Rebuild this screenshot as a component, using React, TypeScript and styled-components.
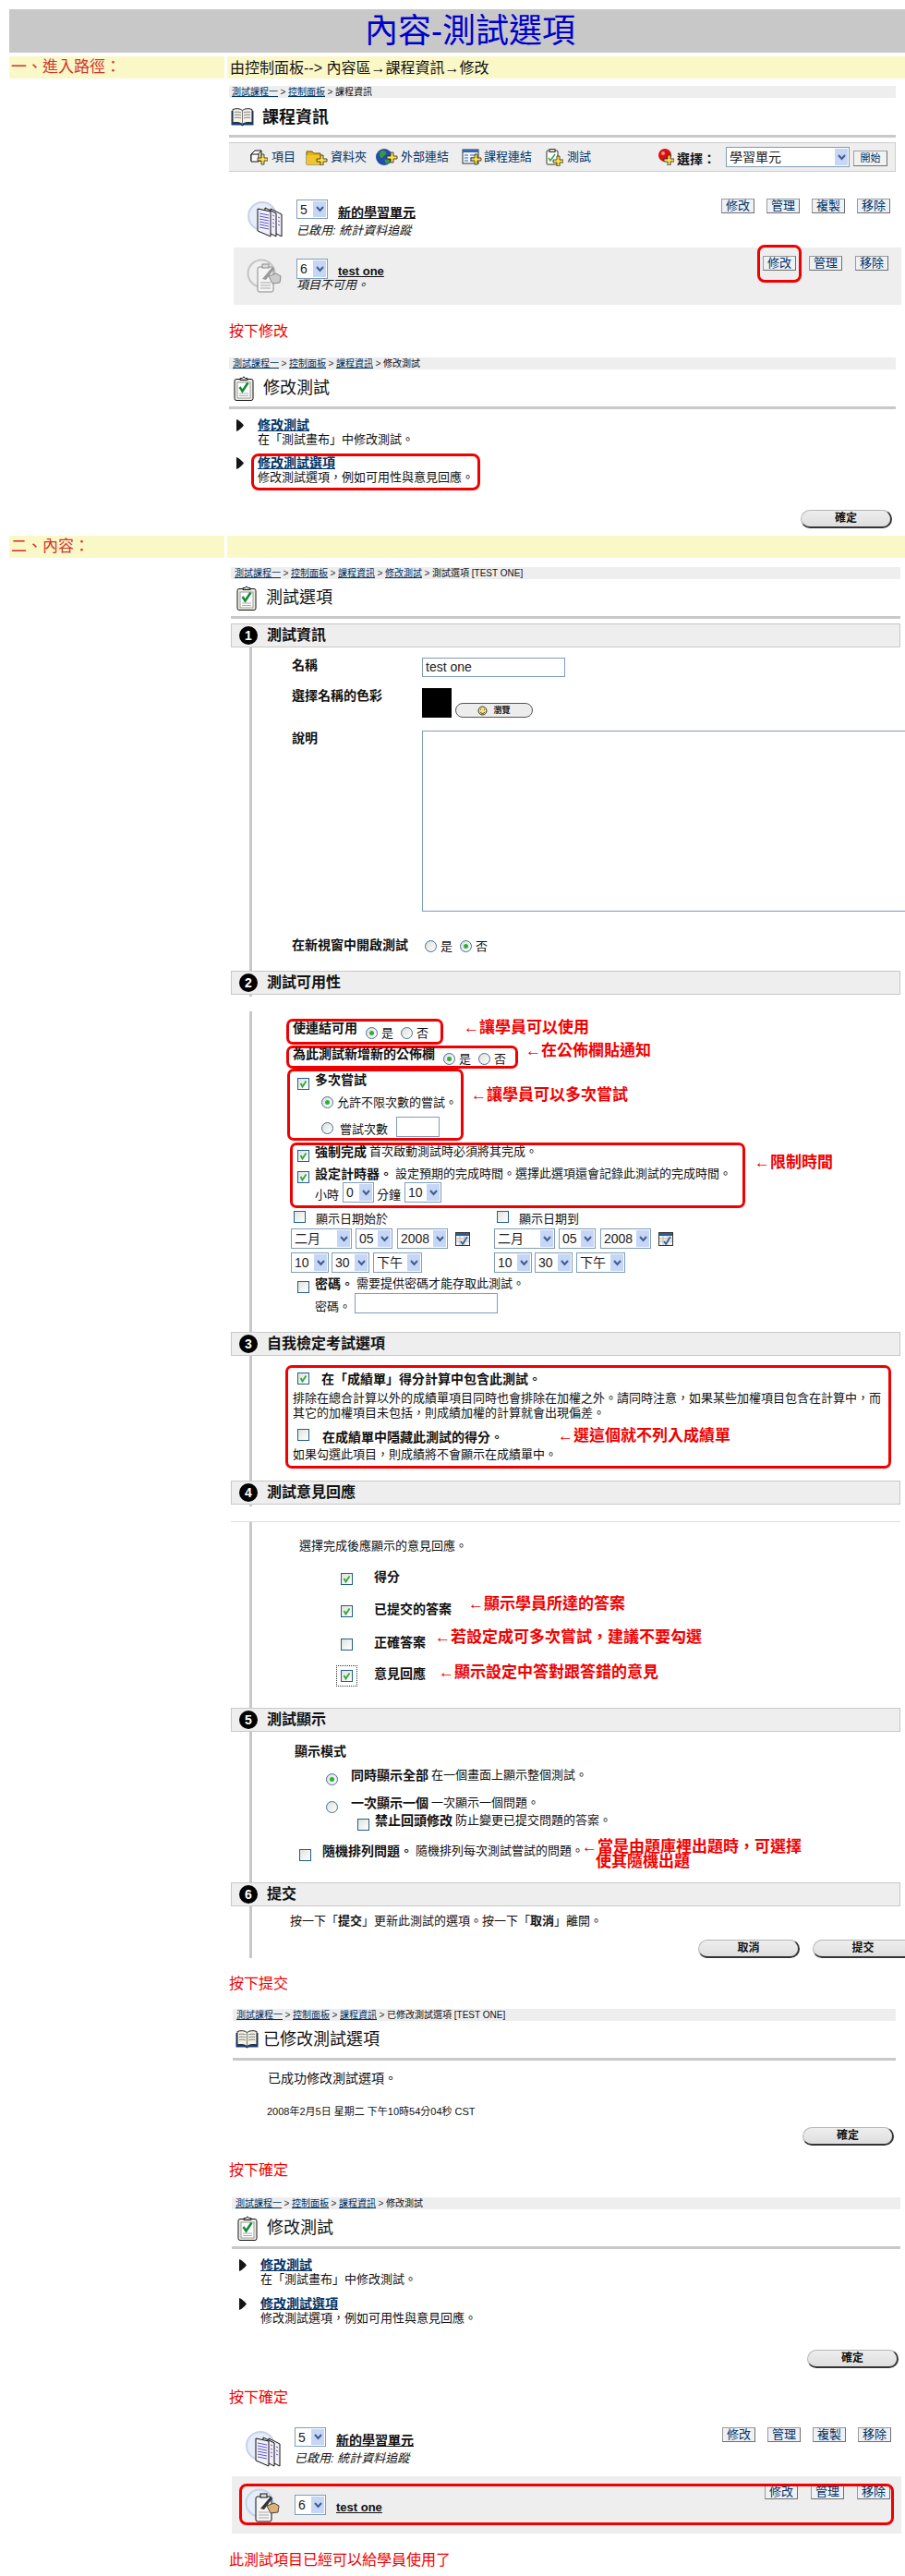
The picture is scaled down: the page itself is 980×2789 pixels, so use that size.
import React from "react";
import styled, { createGlobalStyle } from "styled-components";

const FONT = `"Liberation Sans", "Noto Sans CJK TC", sans-serif`;

const GlobalStyle = createGlobalStyle`
  html, body {
    margin: 0;
    width: 980px;
    height: 2789px;
    overflow: hidden;
    background: #fff;
  }
  body {
    font-family: ${FONT};
    font-size: 13px;
    line-height: 16px;
    color: #111;
  }
`;

const Page = styled.div`
  width: 980px;
  height: 2789px;
  padding-top: 10px;
  box-sizing: border-box;
  overflow: hidden;
`;

const TitleBar = styled.h1`
  margin: 0 0 0 10px;
  height: 47px;
  padding-left: 28px;
  background: #c8c8c8;
  color: #0000cc;
  font-size: 36px;
  font-weight: 400;
  line-height: 47px;
  text-align: center;
`;

const Band = styled.div<{ $t: number }>`
  display: flex;
  gap: 3px;
  margin: ${(p) => p.$t}px 0 0 10px;
  height: 24px;
`;

const BandHead = styled.div`
  width: 233px;
  padding-left: 2px;
  box-sizing: border-box;
  background: #fbf8c8;
  color: #d0342c;
  font-size: 17px;
  line-height: 24px;
`;

const BandBody = styled.div`
  flex: 1;
  padding-left: 3px;
  background: #fbf8c8;
  color: #111;
  font-size: 16px;
  line-height: 26px;
`;

const Shot = styled.section<{ $x: number; $w: number }>`
  margin-left: ${(p) => p.$x}px;
  width: ${(p) => p.$w}px;
`;

const Crumb = styled.div<{ $t: number; $pad: number }>`
  display: flex;
  margin-top: ${(p) => p.$t}px;
  height: 13px;
  padding-left: ${(p) => p.$pad}px;
  background: #eeeeee;
  font-size: 10px;
  line-height: 13px;
  white-space: nowrap;
`;

const CrumbLink = styled.a`
  color: #003366;
  text-decoration: underline;
`;

const CrumbSep = styled.span`
  width: 11px;
  text-align: center;
  color: #333;
`;

const PageHead = styled.div<{ $pad: number; $gap: number; $h?: number; $t?: number; $bold?: boolean }>`
  display: flex;
  align-items: center;
  gap: ${(p) => p.$gap}px;
  margin-top: ${(p) => p.$t ?? 0}px;
  height: ${(p) => p.$h ?? 40}px;
  padding-left: ${(p) => p.$pad}px;
  font-size: 18px;
  font-weight: ${(p) => (p.$bold ? 700 : 400)};
`;

const Divider = styled.div`
  height: 3px;
  background: #c9c9c9;
`;

const Toolbar = styled.div`
  display: flex;
  align-items: center;
  margin-top: 5px;
  height: 32px;
  box-sizing: border-box;
  padding: 0 8px 0 23px;
  background: #eeeeee;
  border-top: 1px solid #cccccc;
  border-bottom: 1px solid #cccccc;
  border-right: 1px solid #cccccc;
`;

const ToolItem = styled.a<{ $l: number; $gap: number }>`
  display: flex;
  align-items: center;
  gap: ${(p) => p.$gap}px;
  margin-left: ${(p) => p.$l}px;
  color: #003366;
  white-space: nowrap;
`;

const ToolPicker = styled.div`
  display: flex;
  align-items: center;
  margin-left: auto;
`;

const PickerLabel = styled.b`
  margin: 3px 11px 0 3px;
  font-size: 14px;
  white-space: nowrap;
`;

const GoButton = styled.span`
  width: 37px;
  height: 17px;
  box-sizing: border-box;
  margin: 3px 0 0 4px;
  background: #f2f2f2;
  border: 1px solid #a0a0a0;
  border-right-color: #707070;
  border-bottom-color: #707070;
  color: #003366;
  font-size: 11px;
  line-height: 15px;
  text-align: center;
`;

const SelectBox = styled.span<{ $w: number; $h?: number }>`
  display: flex;
  flex: none;
  justify-content: space-between;
  width: ${(p) => p.$w}px;
  height: ${(p) => p.$h ?? 22}px;
  box-sizing: border-box;
  padding: 1px 1px 1px 3px;
  background: #fff;
  border: 1px solid #7f9db9;
  font-size: 14px;
  line-height: 18px;
  color: #222;
`;

const SelectArrow = styled.span`
  display: flex;
  align-items: center;
  justify-content: center;
  width: 14px;
  background: #c5d6f6;
`;

const ItemRow = styled.div<{ $x: number; $w: number; $h: number; $t: number; $shade?: boolean; $pad: number; $top: number; $right: number }>`
  position: relative;
  display: flex;
  margin: ${(p) => p.$t}px 0 0 ${(p) => p.$x}px;
  width: ${(p) => p.$w}px;
  height: ${(p) => p.$h}px;
  box-sizing: border-box;
  padding: ${(p) => p.$top}px ${(p) => p.$right}px 0 ${(p) => p.$pad}px;
  background: ${(p) => (p.$shade ? "#eeeeee" : "transparent")};
`;

const ItemIconBox = styled.div<{ $t: number }>`
  flex: none;
  width: 54px;
  margin-top: ${(p) => p.$t}px;
`;

const ItemMain = styled.div`
  flex: 1;
`;

const ItemTitleRow = styled.div`
  display: flex;
  gap: 11px;
`;

const ItemTitle = styled.a<{ $small?: boolean }>`
  margin-top: 6px;
  height: 16px;
  color: #111;
  font-size: ${(p) => (p.$small ? 13 : 14)}px;
  font-weight: 700;
  text-decoration: underline;
`;

const ItemNote = styled.div<{ $t: number }>`
  margin-top: ${(p) => p.$t}px;
  font-style: italic;
`;

const ItemActions = styled.div<{ $gap: number; $t: number }>`
  display: flex;
  gap: ${(p) => p.$gap}px;
  margin-top: ${(p) => p.$t}px;
`;

const MiniButton = styled.span`
  width: 36px;
  height: 16px;
  box-sizing: border-box;
  background: #eef1f6;
  border: 1px solid #9a9a9a;
  border-right-color: #6e6e6e;
  border-bottom-color: #6e6e6e;
  color: #003366;
  font-size: 13px;
  line-height: 14px;
  text-align: center;
`;

const Ring = styled.div<{ $l: number; $y: number; $w: number; $h: number }>`
  position: absolute;
  left: ${(p) => p.$l}px;
  top: ${(p) => p.$y}px;
  width: ${(p) => p.$w}px;
  height: ${(p) => p.$h}px;
  box-sizing: border-box;
  border: 3px solid #f00000;
  border-radius: 8px;
  pointer-events: none;
`;

const Note = styled.p<{ $t: number }>`
  margin: ${(p) => p.$t}px 0 0 248px;
  height: 20px;
  color: #f00000;
  font-size: 16px;
  line-height: 20px;
`;

const LinkItem = styled.div<{ $t: number; $l: number }>`
  position: relative;
  display: flex;
  margin: ${(p) => p.$t}px 0 0 ${(p) => p.$l}px;
`;

const LinkArrow = styled.div`
  width: 23px;
  padding-top: 2px;
`;

const LinkTitle = styled.a`
  display: block;
  color: #003366;
  font-size: 14px;
  font-weight: 700;
  text-decoration: underline;
`;

const PillRow = styled.div<{ $t: number; $r?: number; $l?: number }>`
  display: flex;
  gap: 14px;
  margin-top: ${(p) => p.$t}px;
  margin-left: ${(p) => p.$l ?? 0}px;
  justify-content: ${(p) => (p.$r !== undefined ? "flex-end" : "flex-start")};
  padding-right: ${(p) => p.$r ?? 0}px;
`;

const Pill = styled.span<{ $w: number }>`
  flex: none;
  width: ${(p) => p.$w}px;
  height: 20px;
  box-sizing: border-box;
  background: linear-gradient(#eeeeee, #dedede);
  border: 1px solid #b5b5b5;
  border-right: 2px solid #333;
  border-bottom: 2px solid #333;
  border-radius: 10px;
  font-size: 12px;
  font-weight: 700;
  line-height: 16px;
  text-align: center;
`;

const SectionHead = styled.div`
  display: flex;
  align-items: center;
  gap: 10px;
  height: 26px;
  box-sizing: border-box;
  padding-left: 8px;
  background: #eeeeee;
  border: 1px solid #c8c8c8;
  font-size: 16px;
  font-weight: 700;
`;

const Badge = styled.span`
  width: 20px;
  height: 20px;
  border-radius: 50%;
  background: #000;
  color: #fff;
  font-size: 14px;
  line-height: 20px;
  text-align: center;
`;

const SectionBody = styled.div<{ $gap?: boolean; $rule?: boolean; $pb: number }>`
  position: relative;
  display: flow-root;
  margin: ${(p) => (p.$gap ? 18 : 0)}px 0 0 20px;
  padding-bottom: ${(p) => p.$pb}px;
  border-left: 3px solid #c8c8c8;
  ${(p) =>
    p.$gap &&
    `&::before {
      content: "";
      position: absolute;
      left: -3px;
      top: -18px;
      width: 3px;
      height: 2px;
      background: #c8c8c8;
    }`}
  ${(p) =>
    p.$rule &&
    `&::after {
      content: "";
      position: absolute;
      left: -23px;
      top: 0;
      right: 0;
      height: 1px;
      background: #dddddd;
    }`}
`;

const FieldRow = styled.div<{ $t: number }>`
  display: flex;
  margin: ${(p) => p.$t}px 0 0 43px;
`;

const FieldLabel = styled.b`
  flex: none;
  width: 141px;
  font-size: 14px;
  white-space: nowrap;
`;

const TextField = styled.div<{ $w: number; $h: number; $t?: number; $l?: number }>`
  flex: none;
  width: ${(p) => p.$w}px;
  height: ${(p) => p.$h}px;
  box-sizing: border-box;
  margin: ${(p) => p.$t ?? 0}px 0 0 ${(p) => p.$l ?? 0}px;
  padding: 1px 3px;
  background: #fff;
  border: 1px solid #7f9db9;
  font-size: 14px;
  line-height: 17px;
  color: #222;
`;

const Swatch = styled.div`
  width: 32px;
  height: 32px;
  background: #000;
`;

const BrowseButton = styled.span`
  display: flex;
  align-items: center;
  justify-content: center;
  gap: 6px;
  width: 84px;
  height: 16px;
  box-sizing: border-box;
  align-self: flex-end;
  margin-left: 4px;
  background: #ededed;
  border: 1px solid #555;
  border-radius: 8px;
  font-size: 9px;
  font-weight: 700;
  line-height: 14px;
`;

const Choice = styled.span<{ $t?: number; $l?: number }>`
  display: flex;
  margin: ${(p) => p.$t ?? 0}px 0 0 ${(p) => p.$l ?? 0}px;
`;

const Radio = styled.span<{ $on?: boolean; $t?: number; $l?: number }>`
  display: flex;
  flex: none;
  align-items: center;
  justify-content: center;
  width: 13px;
  height: 13px;
  box-sizing: border-box;
  margin: ${(p) => p.$t ?? 0}px 0 0 ${(p) => p.$l ?? 0}px;
  border: 1px solid #3f6f9a;
  border-radius: 50%;
  background: linear-gradient(135deg, #dedfd8, #ffffff);
  &::after {
    content: "";
    width: 5px;
    height: 5px;
    border-radius: 50%;
    background: ${(p) => (p.$on ? "#2fae3c" : "transparent")};
  }
`;

const CheckFrame = styled.span<{ $t?: number; $l?: number; $focus?: boolean }>`
  position: relative;
  display: block;
  flex: none;
  width: 13px;
  height: 13px;
  box-sizing: border-box;
  margin: ${(p) => p.$t ?? 0}px 0 0 ${(p) => p.$l ?? 0}px;
  border: 1px solid #1f5f8f;
  background: linear-gradient(135deg, #e2e2da, #ffffff);
  ${(p) =>
    p.$focus &&
    `&::after {
      content: "";
      position: absolute;
      left: -6px;
      top: -6px;
      width: 21px;
      height: 21px;
      border: 1px dotted #333;
    }`}
  svg {
    display: block;
  }
`;

const BoxRow = styled.div<{ $t: number }>`
  display: flex;
  margin-top: ${(p) => p.$t}px;
`;

const RedBox = styled.div<{ $l: number; $w: number; $h: number }>`
  flex: none;
  width: ${(p) => p.$w}px;
  height: ${(p) => p.$h}px;
  box-sizing: border-box;
  margin-left: ${(p) => p.$l}px;
  border: 3px solid #f00000;
  border-radius: 7px;
`;

const Annot = styled.div<{ $t: number; $l: number }>`
  flex: none;
  margin: ${(p) => p.$t}px 0 0 ${(p) => p.$l}px;
  color: #f00000;
  font-size: 17px;
  font-weight: 700;
  line-height: 18px;
  white-space: nowrap;
`;

const AnnotStack = styled(Annot)`
  height: 16px;
  line-height: 16px;
`;

const AnnotIndent = styled.span`
  padding-left: 15px;
`;

const OptLine = styled.div<{ $t: number; $l: number; $h?: number }>`
  display: flex;
  height: ${(p) => p.$h ?? 16}px;
  margin: ${(p) => p.$t}px 0 0 ${(p) => p.$l}px;
  white-space: nowrap;
`;

const OptBold = styled.b<{ $w?: number }>`
  flex: none;
  width: ${(p) => (p.$w ? `${p.$w}px` : "auto")};
  font-size: 14px;
  margin-right: 3px;
`;

const OptText = styled.span<{ $t?: number; $l?: number }>`
  flex: none;
  margin: ${(p) => p.$t ?? 0}px 0 0 ${(p) => p.$l ?? 0}px;
`;

const DateGrid = styled.div`
  display: grid;
  grid-template-columns: 220px 220px;
  margin: 3px 0 0 42px;
`;

const DateCol = styled.div``;

const SelectRow = styled.div<{ $t: number }>`
  display: flex;
  margin-top: ${(p) => p.$t}px;
`;

const Para = styled.p<{ $t: number; $l: number }>`
  margin: ${(p) => p.$t}px 0 0 ${(p) => p.$l}px;
  white-space: nowrap;
`;

const SmallPara = styled(Para)`
  font-size: 11px;
  line-height: 14px;
`;

const BigPara = styled(Para)`
  font-size: 14px;
`;

const Plus = () => <path d="M6 0h3v4h4v3H9v4H6V7H2V4h4z" fill="#ffe24a" stroke="#222" strokeWidth="0.8" />;

const PlusAt = ({ x, y }: { x: number; y: number }) => (
  <g transform={`translate(${x} ${y})`}>
    <Plus />
  </g>
);

const DocPlusIcon = () => (
  <svg width="19" height="17" viewBox="0 0 19 17">
    <path d="M1 5l4-4h7v11H1z" fill="#fff" stroke="#111" />
    <path d="M1 5h8v8H1zM9 5l3-4" fill="#fff" stroke="#111" />
    <PlusAt x={6} y={5} />
  </svg>
);

const FolderPlusIcon = () => (
  <svg width="24" height="17" viewBox="0 0 24 17">
    <path d="M1 2h6l2 2h7v12H1z" fill="#e5b21c" stroke="#6b5200" />
    <path d="M1 6h15v10H1z" fill="#f1c52c" />
    <PlusAt x={10} y={6} />
  </svg>
);

const GlobePlusIcon = () => (
  <svg width="24" height="20" viewBox="0 0 24 20">
    <circle cx="9" cy="10" r="9" fill="#1f4fa8" />
    <path d="M4 5c3-3 6-2 7 0s-2 3-3 5-3 1-4-1zM10 13c2-1 5-1 5 1s-3 4-4 3-2-3-1-4z" fill="#3d9440" />
    <PlusAt x={10} y={5} />
  </svg>
);

const LinkPlusIcon = () => (
  <svg width="22" height="18" viewBox="0 0 22 18">
    <rect x="1" y="1" width="17" height="15" fill="#f2f4fb" stroke="#333" />
    <rect x="1" y="1" width="17" height="3" fill="#3565b5" />
    <path d="M3 7h4M3 10h4M3 13h4M9 7h6M9 10h4M9 13h4" stroke="#3565b5" />
    <PlusAt x={8} y={6} />
  </svg>
);

const TestPlusIcon = () => (
  <svg width="19" height="19" viewBox="0 0 19 19">
    <rect x="1" y="2" width="12" height="15" rx="1" fill="#fff" stroke="#333" />
    <rect x="4" y="0.5" width="6" height="3" fill="#ddd" stroke="#333" />
    <path d="M3 10l2 3 5-7" fill="none" stroke="#3aa040" strokeWidth="1.5" />
    <PlusAt x={6} y={8} />
  </svg>
);

const RedBallIcon = () => (
  <svg width="17" height="18" viewBox="0 0 17 18">
    <circle cx="7" cy="7" r="7" fill="#d60f0f" />
    <circle cx="5" cy="5" r="2" fill="#f58a8a" />
    <PlusAt x={4} y={7} />
  </svg>
);

const Chevron = () => (
  <svg width="9" height="7" viewBox="0 0 9 7">
    <path d="M1 1l3.5 4L8 1" fill="none" stroke="#3f5d8f" strokeWidth="2" />
  </svg>
);

const CheckMark = () => (
  <svg width="11" height="11" viewBox="0 0 11 11">
    <path d="M2.5 5l2 3.5 4-6" fill="none" stroke="#2fa83a" strokeWidth="1.8" />
  </svg>
);

const BookIcon = () => (
  <svg width="25" height="20" viewBox="0 0 25 20">
    <path d="M0.5 3v15.5h10l2 1 2-1h10V3z" fill="#123f7a" />
    <path d="M2 1.5c4-1.5 8-1 10.500 1 2.500-2 6.500-2.500 10.500-1V16c-4-1-8-.5-10.500 1.500C10 15.500 6 15 2 16z" fill="#f4f2e6" stroke="#222" />
    <path d="M12.500 2.500v15M4 4.500c2-.5 5-.5 7 .5M4 7.500c2-.5 5-.5 7 .5M4 10.500c2-.5 5-.5 7 .5M14 5c2-1 5-1 7-.5M14 8c2-1 5-1 7-.5M14 11c2-1 5-1 7-.5" fill="none" stroke="#777" />
  </svg>
);

const ClipboardIcon = () => (
  <svg width="22" height="27" viewBox="0 0 22 27">
    <rect x="1" y="3.500" width="20" height="23" rx="2" fill="#eef0e4" stroke="#111" />
    <path d="M7 4.500V2.500h2.500L11 .8l1.500 1.700H15v2z" fill="#dcdcdc" stroke="#111" />
    <rect x="4" y="7" width="14" height="17" fill="#ffffff" stroke="#999" />
    <path d="M6 19h10M6 21.500h10" stroke="#aaa" />
    <path d="M6.500 12l3 4.500 6-9" fill="none" stroke="#118a34" strokeWidth="2.500" />
  </svg>
);

const PagesIcon = () => (
  <svg width="40" height="40" viewBox="0 0 40 40">
    <circle cx="17" cy="16" r="15" fill="#e6ecf8" stroke="#c4d2ea" strokeWidth="2" />
    <g fill="#f3f0fb" stroke="#111">
      <path d="M26 8l12 6v24l-12-6z" />
      <path d="M20 7l12 6v25l-12-6z" />
      <path d="M12 8l14 3v27l-14-6z" />
    </g>
    <path d="M14 13l10 2M14 16l10 2M14 19l10 2M14 22l10 2M14 25l10 2M14 28l10 2M28 15l2 1M28 19l2 1M28 23l2 1M28 27l2 1M34 17l2 1M34 21l2 1M34 25l2 1" stroke="#5c58c4" />
  </svg>
);

const TestItemIcon = ({ faded }: { faded?: boolean }) => (
  <svg width="38" height="37" viewBox="0 0 38 37">
    <circle cx="16" cy="16" r="14.500" fill={faded ? "#efefef" : "#e6ecf8"} stroke={faded ? "#c4c4c4" : "#c4d2ea"} strokeWidth="2" />
    <rect x="12" y="9" width="17" height="27" rx="2" fill="#f4f4f4" stroke={faded ? "#888" : "#111"} />
    <rect x="17" y="6" width="7" height="4" fill="#ddd" stroke={faded ? "#888" : "#111"} />
    <path d="M15 26h11M15 29h11M15 32h11" stroke="#aaa" />
    <path d="M17 22l11-13 2 2-9 12z" fill={faded ? "#999" : "#333"} />
    <path d="M24 19l8-3 5 3-1 7-8 1z" fill={faded ? "#ccc" : "#e0b070"} stroke={faded ? "#888" : "#444"} />
  </svg>
);

const CalendarIcon = () => (
  <svg width="16" height="15" viewBox="0 0 16 15">
    <rect x="0.500" y="0.500" width="15" height="14" fill="#f4f4f4" stroke="#333" />
    <rect x="1" y="1" width="14" height="3" fill="#2a5aa0" />
    <path d="M1 7h14M1 10h14M5 4v10M10 4v10" stroke="#bbb" />
    <path d="M6 10l2 3 5-8" fill="none" stroke="#2a5aa0" strokeWidth="1.500" />
  </svg>
);

const ArrowIcon = () => (
  <svg width="8" height="13" viewBox="0 0 8 13">
    <path d="M0 0c3 1 6 4 8 6.500-2 2.500-5 5.500-8 6.500z" fill="#151515" />
  </svg>
);

const BrowseIcon = () => (
  <svg width="11" height="11" viewBox="0 0 11 11">
    <circle cx="5.500" cy="5.500" r="4.500" fill="#f3e27a" stroke="#333" />
    <path d="M3 4h1M7 4h1M3 7c2 2 3 2 5 0" fill="none" stroke="#333" />
  </svg>
);

const Select = ({ w, h, value }: { w: number; h?: number; value: string }) => (
  <SelectBox $w={w} $h={h}>
    {value}
    <SelectArrow>
      <Chevron />
    </SelectArrow>
  </SelectBox>
);

const Check = ({ on, t, l, focus }: { on?: boolean; t?: number; l?: number; focus?: boolean }) => (
  <CheckFrame $t={t} $l={l} $focus={focus}>
    {on && <CheckMark />}
  </CheckFrame>
);

const Breadcrumb = ({ t, pad, links, last }: { t: number; pad: number; links: string[]; last: string }) => (
  <Crumb $t={t} $pad={pad}>
    {links.map((link) => (
      <React.Fragment key={link}>
        <CrumbLink>{link}</CrumbLink>
        <CrumbSep>&gt;</CrumbSep>
      </React.Fragment>
    ))}
    <span>{last}</span>
  </Crumb>
);

const YesNo = ({ yes, t, l }: { yes: boolean; t?: number; l?: number }) => (
  <Choice $t={t} $l={l}>
    <Radio $on={yes} $t={1} />
    <OptText $l={4}>是</OptText>
    <Radio $on={!yes} $t={1} $l={8} />
    <OptText $l={4}>否</OptText>
  </Choice>
);

const Section = ({ num, title, children }: { num: number; title: string; children: React.ReactNode }) => (
  <>
    <SectionHead>
      <Badge>{num}</Badge>
      {title}
    </SectionHead>
    {children}
  </>
);

const LinkBlock = ({ l, first, second, ring }: { l: number; first: number; second: number; ring?: boolean }) => (
  <>
    <LinkItem $t={first} $l={l}>
      <LinkArrow>
        <ArrowIcon />
      </LinkArrow>
      <div>
        <LinkTitle>修改測試</LinkTitle>
        在「測試畫布」中修改測試。
      </div>
    </LinkItem>
    <LinkItem $t={second} $l={l}>
      <LinkArrow>
        <ArrowIcon />
      </LinkArrow>
      <div>
        <LinkTitle>修改測試選項</LinkTitle>
        修改測試選項，例如可用性與意見回應。
      </div>
      {ring && <Ring $l={16} $y={-2} $w={248} $h={40} />}
    </LinkItem>
  </>
);

const TOOLS = [
  { label: "項目", icon: <DocPlusIcon />, l: 0, gap: 4 },
  { label: "資料夾", icon: <FolderPlusIcon />, l: 11, gap: 3 },
  { label: "外部連結", icon: <GlobePlusIcon />, l: 10, gap: 3 },
  { label: "課程連結", icon: <LinkPlusIcon />, l: 14, gap: 2 },
  { label: "測試", icon: <TestPlusIcon />, l: 15, gap: 4 },
];

const FEEDBACK = [
  { label: "得分", on: true, t: 17 },
  { label: "已提交的答案", on: true, t: 19, note: "←顯示學員所達的答案", nt: -6, nl: 18 },
  { label: "正確答案", on: false, t: 20, note: "←若設定成可多次嘗試，建議不要勾選", nt: -6, nl: 10 },
  { label: "意見回應", on: true, t: 18, focus: true, note: "←顯示設定中答對跟答錯的意見", nt: -2, nl: 14 },
];

const App = () => {
  return (
    <Page>
      <GlobalStyle />
      <TitleBar>內容-測試選項</TitleBar>
      <Band $t={4}>
        <BandHead>一、進入路徑：</BandHead>
        <BandBody>由控制面板--&gt; 內容區→課程資訊→修改</BandBody>
      </Band>

      <Shot $x={248} $w={722}>
        <Breadcrumb t={8} pad={3} links={["測試課程一", "控制面板"]} last="課程資訊" />
        <PageHead $t={2} $h={38} $pad={2} $gap={9} $bold>
          <BookIcon />
          課程資訊
        </PageHead>
        <Divider />
        <Toolbar>
          {TOOLS.map((tool) => (
            <ToolItem key={tool.label} $l={tool.l} $gap={tool.gap}>
              {tool.icon}
              {tool.label}
            </ToolItem>
          ))}
          <ToolPicker>
            <RedBallIcon />
            <PickerLabel>選擇：</PickerLabel>
            <Select w={134} value="學習單元" />
            <GoButton>開始</GoButton>
          </ToolPicker>
        </Toolbar>
      </Shot>

      <ItemRow $t={26} $x={248} $w={722} $h={56} $pad={19} $top={4} $right={6}>
        <ItemIconBox $t={2}>
          <PagesIcon />
        </ItemIconBox>
        <ItemMain>
          <ItemTitleRow>
            <Select w={34} h={21} value="5" />
            <ItemTitle>新的學習單元</ItemTitle>
          </ItemTitleRow>
          <ItemNote $t={4}>已啟用: 統計資料追蹤</ItemNote>
        </ItemMain>
        <ItemActions $gap={13} $t={-1}>
          <MiniButton>修改</MiniButton>
          <MiniButton>管理</MiniButton>
          <MiniButton>複製</MiniButton>
          <MiniButton>移除</MiniButton>
        </ItemActions>
      </ItemRow>
      <ItemRow $t={0} $x={253} $w={723} $h={62} $pad={14} $top={12} $right={14} $shade>
        <ItemIconBox $t={0}>
          <TestItemIcon faded />
        </ItemIconBox>
        <ItemMain>
          <ItemTitleRow>
            <Select w={34} value="6" />
            <ItemTitle $small>test one</ItemTitle>
          </ItemTitleRow>
          <ItemNote $t={-1}>項目不可用。</ItemNote>
        </ItemMain>
        <ItemActions $gap={14} $t={-3}>
          <MiniButton>修改</MiniButton>
          <MiniButton>管理</MiniButton>
          <MiniButton>移除</MiniButton>
        </ItemActions>
        <Ring $l={567} $y={-3} $w={48} $h={41} />
      </ItemRow>
      <Note $t={19}>按下修改</Note>

      <Shot $x={248} $w={722}>
        <Breadcrumb t={18} pad={4} links={["測試課程一", "控制面板", "課程資訊"]} last="修改測試" />
        <PageHead $pad={5} $gap={10}>
          <ClipboardIcon />
          修改測試
        </PageHead>
        <Divider />
        <LinkBlock l={8} first={9} second={9} ring />
        <PillRow $t={27} $r={4}>
          <Pill $w={99}>確定</Pill>
        </PillRow>
      </Shot>

      <Band $t={8}>
        <BandHead>二、內容：</BandHead>
        <BandBody />
      </Band>

      <Shot $x={250} $w={725}>
        <Breadcrumb t={10} pad={4} links={["測試課程一", "控制面板", "課程資訊", "修改測試"]} last="測試選項 [TEST ONE]" />
        <PageHead $pad={6} $gap={10}>
          <ClipboardIcon />
          測試選項
        </PageHead>
        <Divider />
        <BoxRow $t={5} />
        <Section num={1} title="測試資訊">
          <SectionBody $pb={18}>
            <FieldRow $t={11}>
              <FieldLabel>名稱</FieldLabel>
              <TextField $w={155} $h={21}>test one</TextField>
            </FieldRow>
            <FieldRow $t={12}>
              <FieldLabel>選擇名稱的色彩</FieldLabel>
              <Swatch />
              <BrowseButton>
                <BrowseIcon />
                瀏覽
              </BrowseButton>
            </FieldRow>
            <FieldRow $t={14}>
              <FieldLabel>說明</FieldLabel>
              <TextField $w={524} $h={196} />
            </FieldRow>
            <FieldRow $t={28}>
              <FieldLabel>在新視窗中開啟測試</FieldLabel>
              <YesNo yes={false} l={3} t={2} />
            </FieldRow>
          </SectionBody>
        </Section>

        <Section num={2} title="測試可用性">
          <SectionBody $gap $pb={20}>
            <BoxRow $t={8}>
              <RedBox $l={37} $w={170} $h={28}>
                <OptLine $t={-1} $l={4}>
                  <OptBold $w={70}>使連結可用</OptBold>
                  <YesNo yes l={6} t={6} />
                </OptLine>
              </RedBox>
              <Annot $t={1} $l={22}>←讓學員可以使用</Annot>
            </BoxRow>
            <BoxRow $t={1}>
              <RedBox $l={37} $w={251} $h={25}>
                <OptLine $t={-2} $l={4}>
                  <OptBold $w={155}>為此測試新增新的公佈欄</OptBold>
                  <YesNo yes l={5} t={6} />
                </OptLine>
              </RedBox>
              <Annot $t={-3} $l={8}>←在公佈欄貼通知</Annot>
            </BoxRow>
            <BoxRow $t={0}>
              <RedBox $l={38} $w={191} $h={78}>
                <OptLine $t={1} $l={8}>
                  <Check on t={6} />
                  <OptBold $w={66}>
                    <OptText $l={6}>多次嘗試</OptText>
                  </OptBold>
                </OptLine>
                <OptLine $t={9} $l={34}>
                  <Radio $on $t={1} />
                  <OptText $l={4}>允許不限次數的嘗試。</OptText>
                </OptLine>
                <OptLine $t={7} $l={34} $h={22}>
                  <Radio $t={6} />
                  <OptText $t={6} $l={7}>嘗試次數</OptText>
                  <TextField $w={47} $h={22} $l={9} />
                </OptLine>
              </RedBox>
              <Annot $t={20} $l={8}>←讓學員可以多次嘗試</Annot>
            </BoxRow>
            <BoxRow $t={2}>
              <RedBox $l={41} $w={493} $h={71}>
                <OptLine $t={-1} $l={5}>
                  <Check on t={6} />
                  <OptBold>
                    <OptText $l={6}>強制完成</OptText>
                  </OptBold>
                  首次啟動測試時必須將其完成。
                </OptLine>
                <OptLine $t={8} $l={5}>
                  <Check on t={5} />
                  <OptBold>
                    <OptText $l={6}>設定計時器。</OptText>
                  </OptBold>
                  設定預期的完成時間。選擇此選項還會記錄此測試的完成時間。
                </OptLine>
                <OptLine $t={1} $l={24} $h={22}>
                  <OptText $t={6}>小時</OptText>
                  <SelectRow $t={0}>
                    <OptText $l={4} />
                    <Select w={34} value="0" />
                  </SelectRow>
                  <OptText $t={6} $l={3}>分鐘</OptText>
                  <SelectRow $t={0}>
                    <OptText $l={4} />
                    <Select w={40} value="10" />
                  </SelectRow>
                </OptLine>
              </RedBox>
              <Annot $t={13} $l={10}>←限制時間</Annot>
            </BoxRow>
            <DateGrid>
              {["顯示日期始於", "顯示日期到"].map((label) => (
                <DateCol key={label}>
                  <OptLine $t={0} $l={3}>
                    <Check />
                    <OptText $t={1} $l={11}>{label}</OptText>
                  </OptLine>
                  <SelectRow $t={3}>
                    <Select w={66} value="二月" />
                    <OptText $l={4} />
                    <Select w={40} value="05" />
                    <OptText $l={5} />
                    <Select w={55} value="2008" />
                    <OptText $t={4} $l={8}>
                      <CalendarIcon />
                    </OptText>
                  </SelectRow>
                  <SelectRow $t={3}>
                    <Select w={41} value="10" />
                    <OptText $l={3} />
                    <Select w={41} value="30" />
                    <OptText $l={4} />
                    <Select w={53} value="下午" />
                  </SelectRow>
                </DateCol>
              ))}
            </DateGrid>
            <OptLine $t={4} $l={49}>
              <Check t={5} />
              <OptBold>
                <OptText $l={6}>密碼。</OptText>
              </OptBold>
              需要提供密碼才能存取此測試。
            </OptLine>
            <OptLine $t={2} $l={68} $h={22}>
              <OptText $t={7}>密碼。</OptText>
              <TextField $w={155} $h={22} $l={4} />
            </OptLine>
          </SectionBody>
        </Section>

        <Section num={3} title="自我檢定考試選項">
          <SectionBody $pb={13}>
            <BoxRow $t={10}>
              <RedBox $l={36} $w={656} $h={112}>
                <OptLine $t={4} $l={10}>
                  <Check on t={1} />
                  <OptBold>
                    <OptText $l={13}>在「成績單」得分計算中包含此測試。</OptText>
                  </OptBold>
                </OptLine>
                <Para $t={5} $l={5}>
                  排除在總合計算以外的成績單項目同時也會排除在加權之外。請同時注意，如果某些加權項目包含在計算中，而
                  <br />
                  其它的加權項目未包括，則成績加權的計算就會出現偏差。
                </Para>
                <OptLine $t={10} $l={10}>
                  <Check t={-1} />
                  <OptBold>
                    <OptText $l={14}>在成績單中隱藏此測試的得分。</OptText>
                  </OptBold>
                  <Annot $t={-2} $l={56}>←選這個就不列入成績單</Annot>
                </OptLine>
                <Para $t={3} $l={5}>如果勾選此項目，則成績將不會顯示在成績單中。</Para>
              </RedBox>
            </BoxRow>
          </SectionBody>
        </Section>

        <Section num={4} title="測試意見回應">
          <SectionBody $gap $rule $pb={29}>
            <Para $t={19} $l={51}>選擇完成後應顯示的意見回應。</Para>
            {FEEDBACK.map((row) => (
              <OptLine key={row.label} $t={row.t} $l={96}>
                <Check on={row.on} t={4} focus={row.focus} />
                <OptBold>
                  <OptText $l={23}>{row.label}</OptText>
                </OptBold>
                {row.note && (
                  <Annot $t={row.nt} $l={row.nl - 3}>
                    {row.note}
                  </Annot>
                )}
              </OptLine>
            ))}
          </SectionBody>
        </Section>

        <Section num={5} title="測試顯示">
          <SectionBody $pb={26}>
            <OptLine $t={13} $l={46}>
              <OptBold>顯示模式</OptBold>
            </OptLine>
            <OptLine $t={10} $l={80}>
              <Radio $on $t={6} />
              <OptBold>
                <OptText $l={14}>同時顯示全部</OptText>
              </OptBold>
              在一個畫面上顯示整個測試。
            </OptLine>
            <OptLine $t={14} $l={80}>
              <Radio $t={6} />
              <OptBold>
                <OptText $l={14}>一次顯示一個</OptText>
              </OptBold>
              一次顯示一個問題。
            </OptLine>
            <OptLine $t={3} $l={114}>
              <Check t={6} />
              <OptBold>
                <OptText $l={6}>禁止回頭修改</OptText>
              </OptBold>
              防止變更已提交問題的答案。
            </OptLine>
            <OptLine $t={17} $l={51}>
              <Check t={6} />
              <OptBold>
                <OptText $l={12}>隨機排列問題。</OptText>
              </OptBold>
              隨機排列每次測試嘗試的問題。
              <AnnotStack $t={-4} $l={-2}>
                ←當是由題庫裡出題時，可選擇
                <br />
                <AnnotIndent>使其隨機出題</AnnotIndent>
              </AnnotStack>
            </OptLine>
          </SectionBody>
        </Section>

        <Section num={6} title="提交">
          <SectionBody $pb={0}>
            <Para $t={8} $l={41}>
              按一下「<b>提交</b>」更新此測試的選項。按一下「<b>取消</b>」離開。
            </Para>
            <PillRow $t={12} $l={483}>
              <Pill $w={110}>取消</Pill>
              <Pill $w={110}>提交</Pill>
            </PillRow>
          </SectionBody>
        </Section>
      </Shot>

      <Note $t={18}>按下提交</Note>

      <Shot $x={252} $w={718}>
        <Breadcrumb t={17} pad={4} links={["測試課程一", "控制面板", "課程資訊"]} last="已修改測試選項 [TEST ONE]" />
        <PageHead $pad={3} $gap={5}>
          <BookIcon />
          已修改測試選項
        </PageHead>
        <Divider />
        <BigPara $t={11} $l={38}>已成功修改測試選項。</BigPara>
        <SmallPara $t={21} $l={37}>2008年2月5日 星期二 下午10時54分04秒 CST</SmallPara>
        <PillRow $t={10} $r={2}>
          <Pill $w={99}>確定</Pill>
        </PillRow>
      </Shot>

      <Note $t={17}>按下確定</Note>

      <Shot $x={251} $w={724}>
        <Breadcrumb t={19} pad={4} links={["測試課程一", "控制面板", "課程資訊"]} last="修改測試" />
        <PageHead $pad={6} $gap={10}>
          <ClipboardIcon />
          修改測試
        </PageHead>
        <Divider />
        <LinkBlock l={8} first={9} second={10} />
        <PillRow $t={26} $r={2}>
          <Pill $w={99}>確定</Pill>
        </PillRow>
      </Shot>

      <Note $t={22}>按下確定</Note>

      <ItemRow $t={18} $x={246} $w={725} $h={57} $pad={19} $top={4} $right={6}>
        <ItemIconBox $t={4}>
          <PagesIcon />
        </ItemIconBox>
        <ItemMain>
          <ItemTitleRow>
            <Select w={34} h={21} value="5" />
            <ItemTitle>新的學習單元</ItemTitle>
          </ItemTitleRow>
          <ItemNote $t={4}>已啟用: 統計資料追蹤</ItemNote>
        </ItemMain>
        <ItemActions $gap={13} $t={0}>
          <MiniButton>修改</MiniButton>
          <MiniButton>管理</MiniButton>
          <MiniButton>複製</MiniButton>
          <MiniButton>移除</MiniButton>
        </ItemActions>
      </ItemRow>
      <ItemRow $t={0} $x={251} $w={725} $h={62} $pad={14} $top={20} $right={12} $shade>
        <ItemIconBox $t={-7}>
          <TestItemIcon />
        </ItemIconBox>
        <ItemMain>
          <ItemTitleRow>
            <Select w={34} value="6" />
            <ItemTitle $small>test one</ItemTitle>
          </ItemTitleRow>
        </ItemMain>
        <ItemActions $gap={14} $t={-11}>
          <MiniButton>修改</MiniButton>
          <MiniButton>管理</MiniButton>
          <MiniButton>移除</MiniButton>
        </ItemActions>
        <Ring $l={8} $y={8} $w={709} $h={45} />
      </ItemRow>
      <Note $t={19}>此測試項目已經可以給學員使用了</Note>
    </Page>
  );
};

export default App;
